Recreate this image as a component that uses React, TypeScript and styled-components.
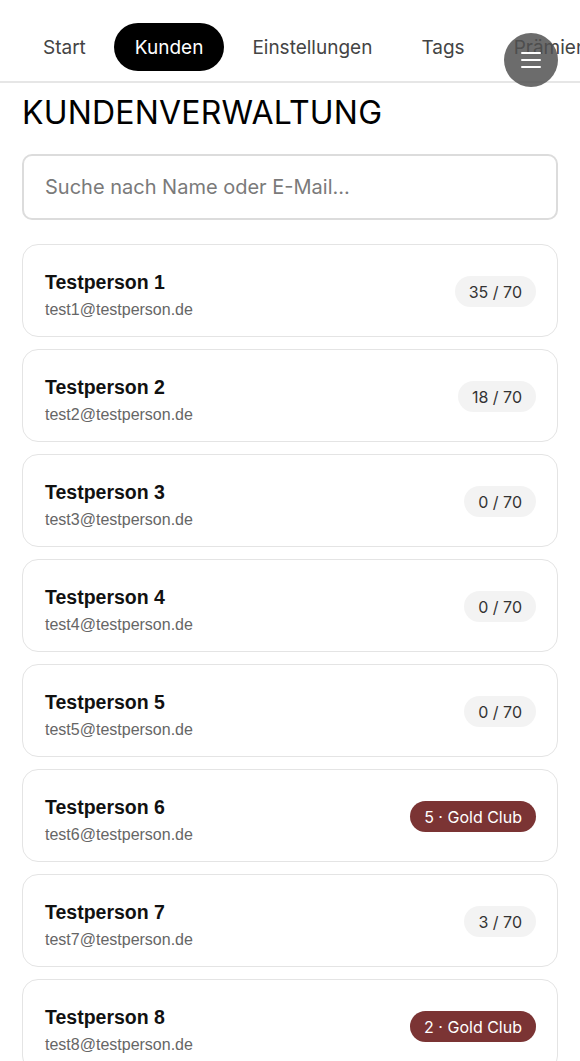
import React from "react";
import styled, { createGlobalStyle } from "styled-components";

const Global = createGlobalStyle`
  html, body { margin: 0; padding: 0; background: #fff; }
  body { font-family: Inter, "Noto Sans", sans-serif; color: #111; overflow: hidden; }
  * { box-sizing: border-box; }
`;

const Page = styled.div`
  width: 580px;
  min-height: 1061px;
  position: relative;
`;

const Nav = styled.nav`
  height: 83px;
  border-bottom: 2px solid #e6e6e6;
  display: flex;
  align-items: flex-start;
  gap: 7px;
  padding: 23px 0 0 22px;
  overflow: hidden;
  white-space: nowrap;
`;

const Tab = styled.div<{ $active?: boolean }>`
  flex: none;
  height: 48px;
  padding: 0 21px;
  border-radius: 24px;
  display: flex;
  align-items: center;
  font-size: 19px;
  color: ${(p) => (p.$active ? "#fff" : "#444")};
  background: ${(p) => (p.$active ? "#000" : "transparent")};
`;

const MenuButton = styled.button`
  position: absolute;
  left: 504px;
  top: 33px;
  width: 54px;
  height: 54px;
  border-radius: 50%;
  border: none;
  background: rgba(80, 80, 80, 0.84);
  display: flex;
  flex-direction: column;
  align-items: center;
  justify-content: center;
  gap: 5px;
  padding: 0;
`;

const MenuLine = styled.span`
  width: 20px;
  height: 2px;
  border-radius: 1px;
  background: #fff;
`;

const Main = styled.main`
  padding: 10px 22px 0 22px;
  display: flex;
  flex-direction: column;
`;

const Title = styled.h1`
  margin: 0;
  font-size: 32px;
  font-weight: 400;
  line-height: 40px;
  letter-spacing: 0.2px;
  color: #000;
`;

const Search = styled.input`
  margin-top: 21px;
  height: 66px;
  width: 100%;
  border: 2px solid #dcdcdc;
  border-radius: 10px;
  padding: 0 21px;
  font-family: Inter, sans-serif;
  font-size: 20px;
  color: #222;
  outline: none;
  &::placeholder { color: #7a7a7a; }
`;

const List = styled.div`
  margin-top: 24px;
  display: flex;
  flex-direction: column;
  gap: 12px;
`;

const Card = styled.div`
  height: 93px;
  border: 1.5px solid #e4e4e4;
  border-radius: 16px;
  padding: 2px 21px 0 22px;
  display: flex;
  align-items: center;
  justify-content: space-between;
`;

const Info = styled.div`
  display: flex;
  flex-direction: column;
  gap: 6px;
  padding-top: 6px;
`;

const Name = styled.div`
  font-family: "Liberation Sans", Arial, sans-serif;
  font-weight: 700;
  font-size: 19.5px;
  line-height: 24px;
  color: #111;
`;

const Email = styled.div`
  font-family: "Liberation Sans", Arial, sans-serif;
  font-size: 16px;
  line-height: 20px;
  color: #666;
`;

const Badge = styled.span<{ $gold?: boolean }>`
  height: 31px;
  padding: 0 14px;
  border-radius: 16px;
  display: inline-flex;
  align-items: center;
  font-size: 16px;
  color: ${(p) => (p.$gold ? "#fff" : "#333")};
  background: ${(p) => (p.$gold ? "#7b3434" : "#f3f3f3")};
`;

const customers = [
  { n: 1, badge: "35 / 70" },
  { n: 2, badge: "18 / 70" },
  { n: 3, badge: "0 / 70" },
  { n: 4, badge: "0 / 70" },
  { n: 5, badge: "0 / 70" },
  { n: 6, badge: "5 · Gold Club", gold: true },
  { n: 7, badge: "3 / 70" },
  { n: 8, badge: "2 · Gold Club", gold: true },
];

export default function App() {
  return (
    <Page>
      <Global />
      <Nav>
        <Tab>Start</Tab>
        <Tab $active>Kunden</Tab>
        <Tab>Einstellungen</Tab>
        <Tab>Tags</Tab>
        <Tab>Prämien</Tab>
      </Nav>
      <MenuButton aria-label="Menü">
        <MenuLine />
        <MenuLine />
        <MenuLine />
      </MenuButton>
      <Main>
        <Title>KUNDENVERWALTUNG</Title>
        <Search placeholder="Suche nach Name oder E-Mail..." />
        <List>
          {customers.map((c) => (
            <Card key={c.n}>
              <Info>
                <Name>Testperson {c.n}</Name>
                <Email>test{c.n}@testperson.de</Email>
              </Info>
              <Badge $gold={c.gold}>{c.badge}</Badge>
            </Card>
          ))}
        </List>
      </Main>
    </Page>
  );
}
